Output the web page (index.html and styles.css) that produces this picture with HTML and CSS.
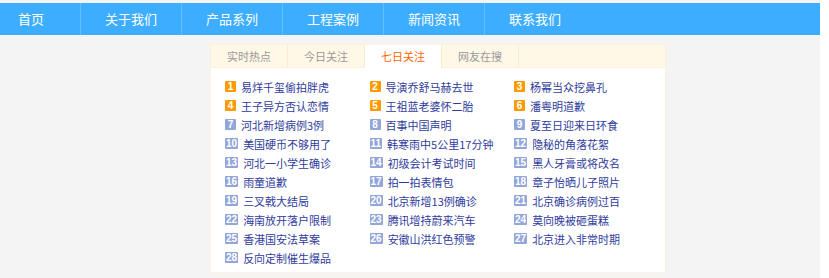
FILE: index.html
```html
<!DOCTYPE html>
<html lang="zh-CN">
<head>
    <meta charset="UTF-8">
    <meta name="viewport" content="width=device-width, initial-scale=1.0">
    <title>七日关注</title>
    <link rel="stylesheet" href="styles.css">
</head>
<body>

    <div class="page">
        <ul class="nav">
            <li class="nav-item first">首页</li>
            <li class="nav-item">关于我们</li>
            <li class="nav-item">产品系列</li>
            <li class="nav-item">工程案例</li>
            <li class="nav-item">新闻资讯</li>
            <li class="nav-item last">联系我们</li>
        </ul>

        <div class="hot-box">
            <div class="tabs">
                <span class="tab">实时热点</span>
                <span class="tab">今日关注</span>
                <span class="tab active">七日关注</span>
                <span class="tab">网友在搜</span>
            </div>

            <ol class="hot-list">
                <li><i class="num top">1</i>易烊千玺偷拍胖虎</li>
                <li><i class="num top">2</i>导演乔舒马赫去世</li>
                <li><i class="num top">3</i>杨幂当众挖鼻孔</li>
                <li><i class="num top">4</i>王子异方否认恋情</li>
                <li><i class="num top">5</i>王祖蓝老婆怀二胎</li>
                <li><i class="num top">6</i>潘粤明道歉</li>
                <li><i class="num">7</i>河北新增病例3例</li>
                <li><i class="num">8</i>百事中国声明</li>
                <li><i class="num">9</i>夏至日迎来日环食</li>
                <li><i class="num">10</i>美国硬币不够用了</li>
                <li><i class="num">11</i>韩寒雨中5公里17分钟</li>
                <li><i class="num">12</i>隐秘的角落花絮</li>
                <li><i class="num">13</i>河北一小学生确诊</li>
                <li><i class="num">14</i>初级会计考试时间</li>
                <li><i class="num">15</i>黑人牙膏或将改名</li>
                <li><i class="num">16</i>雨童道歉</li>
                <li><i class="num">17</i>拍一拍表情包</li>
                <li><i class="num">18</i>章子怡晒儿子照片</li>
                <li><i class="num">19</i>三叉戟大结局</li>
                <li><i class="num">20</i>北京新增13例确诊</li>
                <li><i class="num">21</i>北京确诊病例过百</li>
                <li><i class="num">22</i>海南放开落户限制</li>
                <li><i class="num">23</i>腾讯增持蔚来汽车</li>
                <li><i class="num">24</i>莫向晚被砸蛋糕</li>
                <li><i class="num">25</i>香港国安法草案</li>
                <li><i class="num">26</i>安徽山洪红色预警</li>
                <li><i class="num">27</i>北京进入非常时期</li>
                <li><i class="num">28</i>反向定制催生爆品</li>
            </ol>
        </div>
    </div>

</body>
</html>
```

FILE: styles.css
```css
html, body {
    margin: 0;
    padding: 0;
    background-color: #fff;
}

body {
    font-family: "Noto Sans CJK SC", "Liberation Sans", sans-serif;
}

.page {
    width: 820px;
    min-height: 278px;
    background-color: #f4f4f4;
    padding-top: 3px;
    box-sizing: border-box;
}

/* 导航 */
.nav {
    display: flex;
    list-style: none;
    margin: 0;
    padding: 0;
    height: 32px;
    background-color: #3daeff;
}

.nav-item {
    width: 100px;
    line-height: 32px;
    font-size: 13px;
    color: #fff;
    text-align: center;
    border-right: 1px solid #62bfff;
}

.nav-item.first {
    width: 80px;
    text-align: left;
    padding-left: 18px;
    box-sizing: border-box;
    width: 81px;
}

.nav-item.last {
    border-right: none;
}

/* 热点 */
.hot-box {
    width: 456px;
    margin: 9px 0 0 210px;
    background-color: #fff;
    border: 1px solid #fcf2dc;
    box-sizing: border-box;
    padding-bottom: 5px;
}

.tabs {
    display: flex;
    height: 22px;
    background-color: #fff8e7;
    border-bottom: 1px solid #fcf0d6;
}

.tab {
    width: 76px;
    line-height: 22px;
    font-size: 11px;
    color: #999;
    text-align: center;
    border-right: 1px solid #f9ebcb;
}

.tab.active {
    background-color: #fff;
    color: #ff6600;
    height: 23px;
}

.hot-list {
    display: grid;
    grid-template-columns: repeat(3, 144.5px);
    list-style: none;
    margin: 0;
    padding: 9px 0 0 14px;
}

.hot-list li {
    display: flex;
    align-items: center;
    height: 19px;
    font-size: 11px;
    color: #2f3c9c;
    white-space: nowrap;
}

.num {
    display: inline-block;
    min-width: 11px;
    height: 11px;
    line-height: 11px;
    margin-right: 5px;
    padding: 0 1px;
    box-sizing: border-box;
    font-style: normal;
    font-family: "Liberation Sans", sans-serif;
    font-size: 10px;
    font-weight: bold;
    color: #fff;
    text-align: center;
    background-color: #93a6da;
    border-radius: 1px;
}

.num.top {
    background-color: #ff9a00;
}
```
